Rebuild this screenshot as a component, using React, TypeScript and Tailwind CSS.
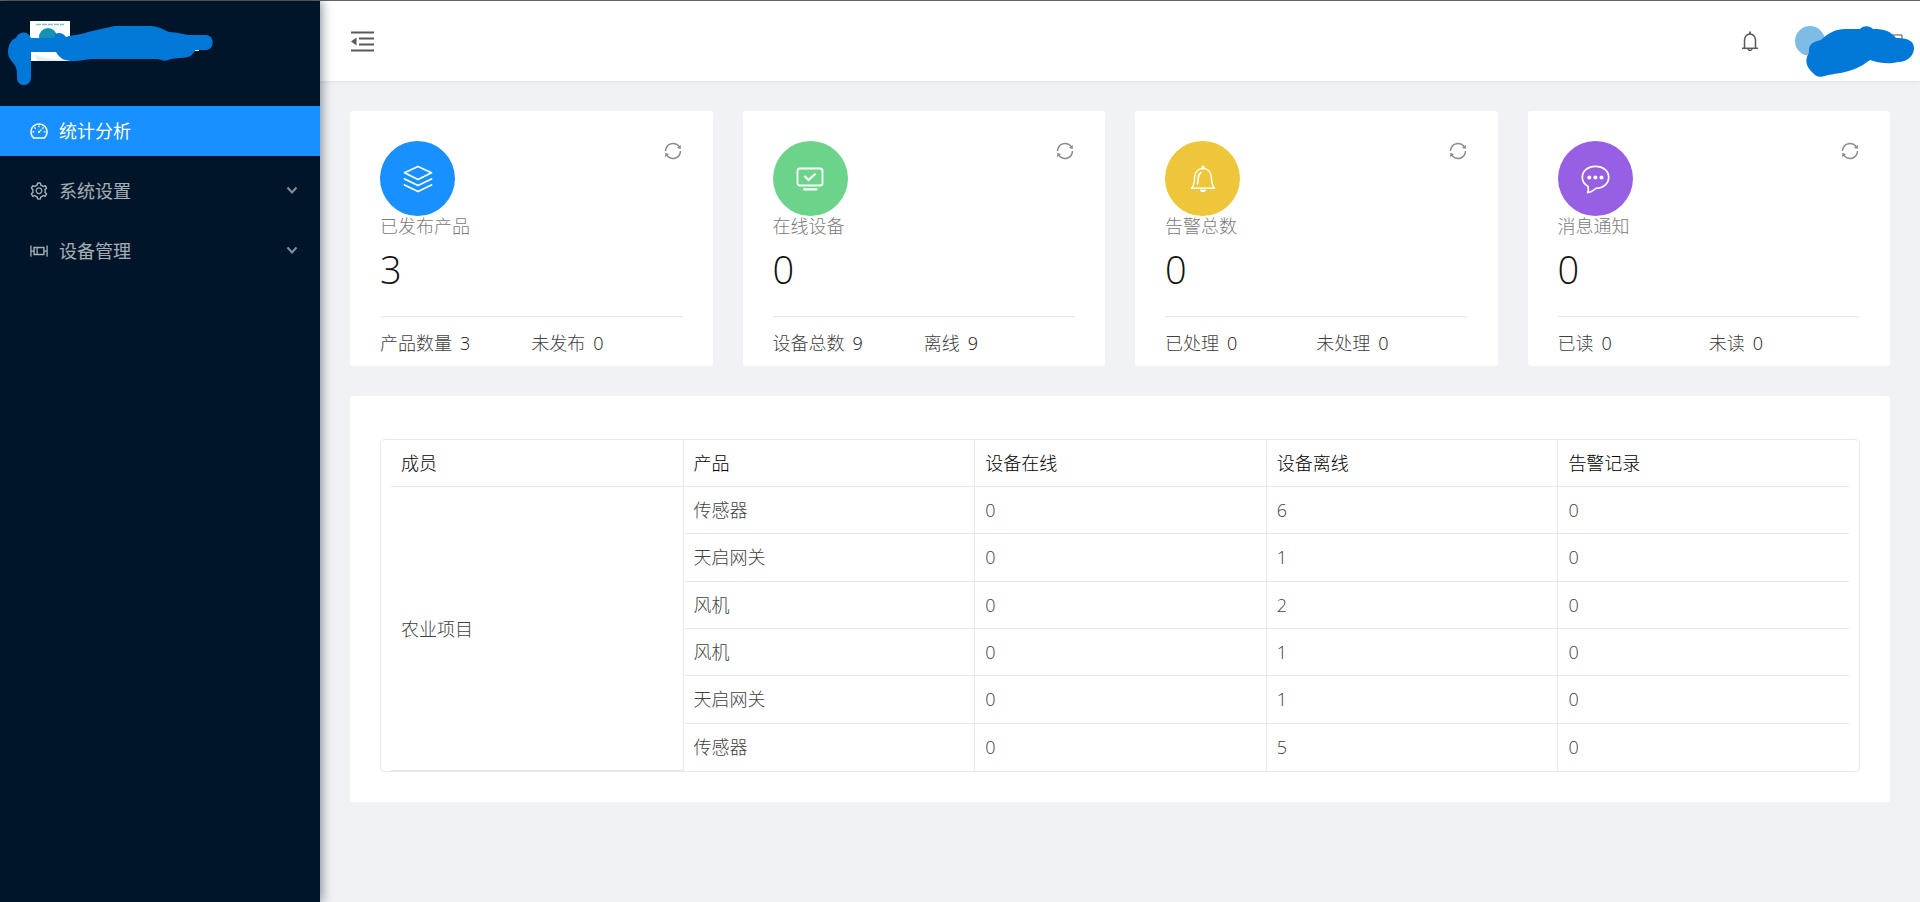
import type { ComponentType, ReactNode } from 'react'
import {
  AiOutlineBoxPlot,
  AiOutlineDashboard,
  AiOutlineSetting,
  AiOutlineSync,
} from 'react-icons/ai'

type MenuItem = {
  label: string
  icon: ComponentType<{ className?: string }>
  active?: boolean
  expandable?: boolean
}

type Stat = {
  title: string
  value: number
  color: string
  icon: ReactNode
  details: { label: string; value: number }[]
}

const menu: MenuItem[] = [
  { label: '统计分析', icon: AiOutlineDashboard, active: true },
  { label: '系统设置', icon: AiOutlineSetting, expandable: true },
  { label: '设备管理', icon: AiOutlineBoxPlot, expandable: true },
]

const LayersIcon = () => (
  <svg viewBox="0 0 30 30" className="w-[30px] h-[30px]" fill="none" stroke="currentColor" strokeWidth="1.800" strokeLinejoin="round" strokeLinecap="round">
    <path d="M15 2.500 28.500 8.800 15 15.500 1.500 8.800z" />
    <path d="M1.500 15 15 21.500 28.500 15" />
    <path d="M1.500 21 15 27.500 28.500 21" />
  </svg>
)

const MonitorIcon = () => (
  <svg viewBox="0 0 30 30" className="w-[30px] h-[30px]" fill="none" stroke="currentColor" strokeWidth="1.800" strokeLinejoin="round" strokeLinecap="round">
    <rect x="2.500" y="4.500" width="25" height="17" rx="2.500" />
    <path d="M9.500 12 13.500 16 20.500 9.800" strokeWidth="2.200" strokeLinecap="butt" strokeLinejoin="miter" />
    <path d="M9 25.300H21.500" strokeWidth="2.200" />
  </svg>
)

const AlarmIcon = () => (
  <svg viewBox="0 0 30 30" className="w-[30px] h-[30px]" fill="none" stroke="currentColor" strokeWidth="1.500" strokeLinejoin="round" strokeLinecap="round">
    <path d="M15 4.500c-5 0-8 3.700-8.300 8.500-.2 5-.7 8.500-3.200 11.200h23c-2.500-2.700-3-6.200-3.200-11.200-.3-4.800-3.300-8.500-8.300-8.500z" />
    <path d="M13 8.500c-2.500 1.500-2.800 4-2.800 6 0 2-.2 3.700-.7 5.500" />
    <circle cx="15" cy="3" r="1.600" fill="currentColor" stroke="none" />
    <path d="M11.800 25.800h6.400c-.5 1.800-1.800 2.500-3.200 2.500s-2.700-.7-3.200-2.500z" fill="currentColor" stroke="none" />
  </svg>
)

const MessageIcon = () => (
  <svg viewBox="0 0 30 30" className="w-[30px] h-[30px]" fill="none" stroke="currentColor" strokeWidth="1.700" strokeLinejoin="round">
    <path d="M15.500 2.300c-7.500 0-13.200 4.700-13.200 11 0 4 2.300 7.300 5.800 9.200.4 2 .3 4-.4 6.200 3.300-.4 5-1.700 8.300-4.300 7.300-.2 12.700-4.800 12.700-11.100s-5.700-11-13.200-11z" />
    <g fill="currentColor" stroke="none">
      <circle cx="9.300" cy="13.500" r="2" />
      <circle cx="15.400" cy="13.500" r="2" />
      <circle cx="21.500" cy="13.500" r="2" />
    </g>
  </svg>
)

const stats: Stat[] = [
  {
    title: '已发布产品',
    value: 3,
    color: 'bg-[#1890ff]',
    icon: <LayersIcon />,
    details: [{ label: '产品数量', value: 3 }, { label: '未发布', value: 0 }],
  },
  {
    title: '在线设备',
    value: 0,
    color: 'bg-[#6bd48a]',
    icon: <MonitorIcon />,
    details: [{ label: '设备总数', value: 9 }, { label: '离线', value: 9 }],
  },
  {
    title: '告警总数',
    value: 0,
    color: 'bg-[#edc63a]',
    icon: <AlarmIcon />,
    details: [{ label: '已处理', value: 0 }, { label: '未处理', value: 0 }],
  },
  {
    title: '消息通知',
    value: 0,
    color: 'bg-[#975fe4]',
    icon: <MessageIcon />,
    details: [{ label: '已读', value: 0 }, { label: '未读', value: 0 }],
  },
]

const columns = ['成员', '产品', '设备在线', '设备离线', '告警记录']

const rows = [
  { product: '传感器', online: 0, offline: 6, alarms: 0 },
  { product: '天启网关', online: 0, offline: 1, alarms: 0 },
  { product: '风机', online: 0, offline: 2, alarms: 0 },
  { product: '风机', online: 0, offline: 1, alarms: 0 },
  { product: '天启网关', online: 0, offline: 1, alarms: 0 },
  { product: '传感器', online: 0, offline: 5, alarms: 0 },
]

function Sidebar() {
  return (
    <aside className="relative z-10 w-80 shrink-0 bg-[#001529] shadow-[2px_0_10px_rgba(0,21,41,0.45)]">
      {/* Brand */}
      <div className="h-[105px]">
        <svg viewBox="0 0 320 105" className="w-80 h-[105px]">
          <rect x="30" y="20" width="40" height="40" fill="#fff" />
          <path d="M36 23.500H64" stroke="#7fc4cf" strokeWidth="1.500" strokeDasharray="5 1" />
          <circle cx="48" cy="36" r="9" fill="#1690b5" />
          <path d="M34 53q14 7 32 5v2H38z" fill="#e3f2f3" />
          <path
            d="M16 37c1-3 4-5.500 8-5.500 3 0 5.500 2 7 5.500h23c0-6 8-7 12-1 6-2 14-2 22-5 9-2 17-4 27-6h35c8 0 13 3.500 19 6 8 .5 14 2 20 3h17c9 0 9 15 0 15h-10c-4 5-6 8-16 8-6 .5-9 1-12 2-4 1.500-7 0-10-1H92c-9 1-13 2-18 2-9 0-14-2-18-9H31v26c-1 10-14 9-14 0 0-8 0-9-3-14-4-5-6-7-6-12 0-6 3-13 8-14z"
            fill="#0078d7"
          />
          <rect x="195" y="49" width="4" height="1" fill="#fff" />
        </svg>
      </div>
      <nav className="flex flex-col gap-[10px] font-normal">
        {menu.map(({ label, icon: Icon, active, expandable }) => (
          <a
            key={label}
            href="#"
            className={`flex items-center h-[50px] pl-[29px] pr-[22px] ${
              active ? 'bg-[#1890ff] text-white' : 'text-white/65'
            }`}
          >
            <Icon className="w-5 h-5 mr-[10px]" />
            <span className="flex-1">{label}</span>
            {expandable && (
              <svg viewBox="0 0 12 12" className="w-3 h-3 opacity-80" fill="none" stroke="currentColor" strokeWidth="2">
                <path d="M1.500 2.500 6 7.500 10.500 2.500" />
              </svg>
            )}
          </a>
        ))}
      </nav>
    </aside>
  )
}

function Header() {
  return (
    <header className="flex items-center justify-between h-20 pl-[30px] bg-white shadow-[0_1px_4px_rgba(0,21,41,0.08)]">
      <button type="button" aria-label="折叠菜单" className="text-[#595959]">
        <svg viewBox="0 0 25 25" className="w-[25px] h-[25px]" fill="none" stroke="currentColor" strokeWidth="2">
          <path d="M1 3.500H24M9 9.500H24M9 15.500H24M1 21.500H24" />
          <path d="M1 12.500 6.500 8.500v8z" fill="currentColor" stroke="none" />
        </svg>
      </button>
      <div className="flex items-center">
        <button type="button" aria-label="通知" className="text-[#595959]">
          <svg viewBox="0 0 20 20" className="w-5 h-5" fill="none" stroke="currentColor" strokeWidth="1.500">
            <path d="M4.500 17V9a5.500 6 0 0 1 11 0v8" />
            <path d="M2 17.300H18" />
            <path d="M8 17.500c.2 2.500 3.800 2.500 4 0" />
            <path d="M10 .5v3" strokeWidth="1.800" />
          </svg>
        </button>
        <svg viewBox="0 0 160 80" className="w-40 h-20" aria-hidden="true">
          <circle cx="50" cy="40" r="15" fill="#7ebce5" />
          <path d="M130 34h12v8" fill="none" stroke="#555" />
          <path
            d="M49 49c0-6 4-8 12-10 8-8 15-10.500 24-11h15c4-4 10-3 13 0 12 0 17 2 23 9 15 0 18 5 18 10 0 8-7 14-16 14-8 2-16 2-28-2-12 9-20 12-42 15-8 3-11 2-14-1-6-5-9-11-7-17 1-2 2-3 2-7z"
            fill="#0078d7"
          />
        </svg>
      </div>
    </header>
  )
}

function StatCard({ stat }: { stat: Stat }) {
  return (
    <section className="px-[30px] pt-[30px] bg-white rounded-[3px]">
      <div className="flex items-start justify-between">
        <div className={`flex items-center justify-center w-[75px] h-[75px] rounded-full text-white ${stat.color}`}>
          {stat.icon}
        </div>
        <button type="button" aria-label="刷新" className="text-[#8c8c8c]">
          <AiOutlineSync className="w-5 h-5" />
        </button>
      </div>
      <h2 className="leading-5 text-[#7a7a7a]">{stat.title}</h2>
      <p className="pt-2 h-20 text-[38px] leading-[50px] text-[#111]">{stat.value}</p>
      <dl className="grid grid-cols-2 h-[50px] pt-[14px] border-t border-[#e8e8e8]">
        {stat.details.map((item) => (
          <div key={item.label} className="flex gap-2">
            <dt>{item.label}</dt>
            <dd className="text-[#111]">{item.value}</dd>
          </div>
        ))}
      </dl>
    </section>
  )
}

function MemberTable() {
  return (
    <section className="px-[30px] pt-[43px] pb-[30px] bg-white rounded-[3px]">
      <div className="px-[10px] border border-[#e8e8e8] rounded-[5px]">
        <table className="w-full h-[331px] table-fixed border-separate border-spacing-0 text-left">
          <thead>
            <tr>
              {columns.map((col) => (
                <th
                  key={col}
                  className="h-[47px] px-[10px] font-light text-black border-b border-l border-[#e8e8e8] first:border-l-0"
                >
                  {col}
                </th>
              ))}
            </tr>
          </thead>
          <tbody>
            {rows.map((row, i) => {
              const cell = `h-[47px] px-[10px] border-l border-[#e8e8e8] ${
                i < rows.length - 1 ? 'border-b' : ''
              }`
              return (
                <tr key={i}>
                  {i === 0 && (
                    <td rowSpan={rows.length} className="px-[10px] border-b border-[#e8e8e8]">
                      农业项目
                    </td>
                  )}
                  <td className={cell}>{row.product}</td>
                  <td className={cell}>{row.online}</td>
                  <td className={cell}>{row.offline}</td>
                  <td className={cell}>{row.alarms}</td>
                </tr>
              )
            })}
          </tbody>
        </table>
      </div>
    </section>
  )
}

export default function App() {
  return (
    <div className="flex min-h-screen border-t border-[#666] bg-[#f0f2f5] font-['Open_Sans','Noto_Sans_CJK_SC',sans-serif] text-[18px] leading-6 font-light text-[#404040]">
      <Sidebar />
      <div className="flex-1 min-w-0">
        <Header />
        <main className="flex flex-col gap-[30px] p-[30px]">
          <div className="grid grid-cols-4 gap-[30px]">
            {stats.map((stat) => (
              <StatCard key={stat.title} stat={stat} />
            ))}
          </div>
          <MemberTable />
        </main>
      </div>
    </div>
  )
}
